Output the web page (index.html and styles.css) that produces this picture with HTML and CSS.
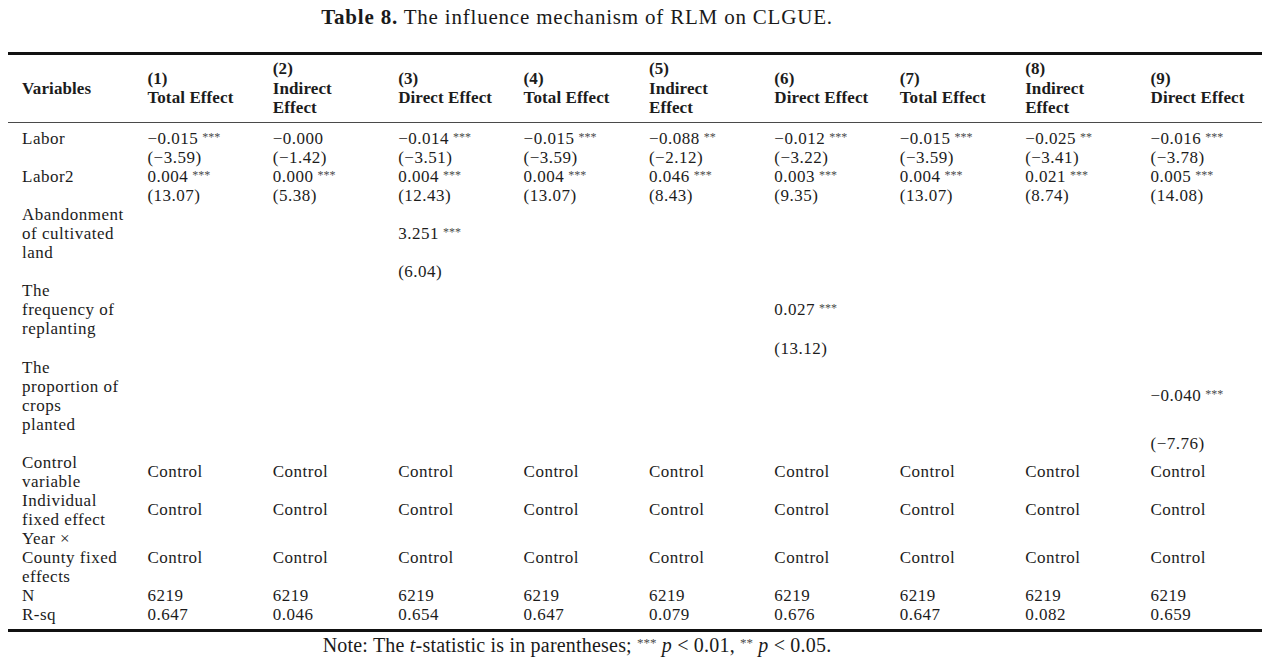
FILE: index.html
```html
<!DOCTYPE html>
<html lang="en">
<head>
<meta charset="utf-8">
<title>Table 8</title>
<link rel="stylesheet" href="styles.css">
</head>
<body>
<div class="page">
  <div class="caption"><b>Table 8.</b> The influence mechanism of RLM on CLGUE.</div>
  <div class="tablewrap">
    <table class="results">
      <thead>
        <tr>
          <th>Variables</th>
          <th>(1)<br>Total Effect</th>
          <th>(2)<br>Indirect<br>Effect</th>
          <th>(3)<br>Direct Effect</th>
          <th>(4)<br>Total Effect</th>
          <th>(5)<br>Indirect<br>Effect</th>
          <th>(6)<br>Direct Effect</th>
          <th>(7)<br>Total Effect</th>
          <th>(8)<br>Indirect<br>Effect</th>
          <th>(9)<br>Direct Effect</th>
        </tr>
      </thead>
      <tbody>
        <tr class="first">
          <td>Labor</td>
          <td>−0.015<sup>***</sup></td>
          <td>−0.000</td>
          <td>−0.014<sup>***</sup></td>
          <td>−0.015<sup>***</sup></td>
          <td>−0.088<sup>**</sup></td>
          <td>−0.012<sup>***</sup></td>
          <td>−0.015<sup>***</sup></td>
          <td>−0.025<sup>**</sup></td>
          <td>−0.016<sup>***</sup></td>
        </tr>
        <tr>
          <td></td>
          <td>(−3.59)</td>
          <td>(−1.42)</td>
          <td>(−3.51)</td>
          <td>(−3.59)</td>
          <td>(−2.12)</td>
          <td>(−3.22)</td>
          <td>(−3.59)</td>
          <td>(−3.41)</td>
          <td>(−3.78)</td>
        </tr>
        <tr>
          <td>Labor2</td>
          <td>0.004<sup>***</sup></td>
          <td>0.000<sup>***</sup></td>
          <td>0.004<sup>***</sup></td>
          <td>0.004<sup>***</sup></td>
          <td>0.046<sup>***</sup></td>
          <td>0.003<sup>***</sup></td>
          <td>0.004<sup>***</sup></td>
          <td>0.021<sup>***</sup></td>
          <td>0.005<sup>***</sup></td>
        </tr>
        <tr>
          <td></td>
          <td>(13.07)</td>
          <td>(5.38)</td>
          <td>(12.43)</td>
          <td>(13.07)</td>
          <td>(8.43)</td>
          <td>(9.35)</td>
          <td>(13.07)</td>
          <td>(8.74)</td>
          <td>(14.08)</td>
        </tr>
        <tr>
          <td>Abandonment<br>of cultivated<br>land</td>
          <td></td><td></td>
          <td>3.251<sup>***</sup></td>
          <td></td><td></td><td></td><td></td><td></td><td></td>
        </tr>
        <tr>
          <td></td><td></td><td></td>
          <td>(6.04)</td>
          <td></td><td></td><td></td><td></td><td></td><td></td>
        </tr>
        <tr>
          <td>The<br>frequency of<br>replanting</td>
          <td></td><td></td><td></td><td></td><td></td>
          <td>0.027<sup>***</sup></td>
          <td></td><td></td><td></td>
        </tr>
        <tr>
          <td></td><td></td><td></td><td></td><td></td><td></td>
          <td>(13.12)</td>
          <td></td><td></td><td></td>
        </tr>
        <tr>
          <td>The<br>proportion of<br>crops<br>planted</td>
          <td></td><td></td><td></td><td></td><td></td><td></td><td></td><td></td>
          <td>−0.040<sup>***</sup></td>
        </tr>
        <tr>
          <td></td><td></td><td></td><td></td><td></td><td></td><td></td><td></td><td></td>
          <td>(−7.76)</td>
        </tr>
        <tr>
          <td>Control<br>variable</td>
          <td>Control</td><td>Control</td><td>Control</td><td>Control</td><td>Control</td><td>Control</td><td>Control</td><td>Control</td><td>Control</td>
        </tr>
        <tr>
          <td>Individual<br>fixed effect</td>
          <td>Control</td><td>Control</td><td>Control</td><td>Control</td><td>Control</td><td>Control</td><td>Control</td><td>Control</td><td>Control</td>
        </tr>
        <tr>
          <td>Year ×<br>County fixed<br>effects</td>
          <td>Control</td><td>Control</td><td>Control</td><td>Control</td><td>Control</td><td>Control</td><td>Control</td><td>Control</td><td>Control</td>
        </tr>
        <tr>
          <td>N</td>
          <td>6219</td><td>6219</td><td>6219</td><td>6219</td><td>6219</td><td>6219</td><td>6219</td><td>6219</td><td>6219</td>
        </tr>
        <tr class="last">
          <td>R-sq</td>
          <td>0.647</td>
          <td>0.046</td>
          <td>0.654</td>
          <td>0.647</td>
          <td>0.079</td>
          <td>0.676</td>
          <td>0.647</td>
          <td>0.082</td>
          <td>0.659</td>
        </tr>
      </tbody>
    </table>
  </div>
  <div class="note">Note: The <i>t</i>-statistic is in parentheses; <sup>***</sup> <i>p</i> &lt; 0.01, <sup>**</sup> <i>p</i> &lt; 0.05.</div>
</div>
</body>
</html>
```

FILE: styles.css
```css
html, body {
  margin: 0;
  padding: 0;
  background: #ffffff;
}

body {
  font-family: "Liberation Serif", "Times New Roman", serif;
  color: #1c1c1c;
}

.page {
  width: 1280px;
  height: 661px;
  overflow: hidden;
}

.caption {
  width: 1138px;
  margin-left: 8px;
  padding-top: 5px;
  font-size: 21px;
  line-height: 24px;
  letter-spacing: 0.8px;
  text-align: center;
  color: #1a1a1a;
}

.caption b {
  font-weight: bold;
}

.tablewrap {
  margin-top: 23px;
  margin-left: 8px;
  width: 1254px;
  border-top: 3px solid #111;
  border-bottom: 3px solid #111;
}

.results {
  width: 1254px;
  table-layout: fixed;
  border-collapse: separate;
  border-spacing: 0;
  font-size: 17px;
  line-height: 19.05px;
  letter-spacing: 0.5px;
}

.results th,
.results td {
  padding: 0 0 0 14px;
  text-align: left;
  vertical-align: middle;
  white-space: nowrap;
}

.results th {
  font-weight: bold;
  letter-spacing: 0.1px;
  line-height: 19.5px;
  padding-top: 4px;
  padding-bottom: 4.5px;
  border-bottom: 1px solid #4a4a4a;
}

.results tr.first td {
  padding-top: 6px;
}

.results tr.last td {
  padding-bottom: 5px;
}

.results sup,
.note sup {
  font-size: 12px;
  line-height: 0;
  vertical-align: 3px;
  margin-left: 4px;
  letter-spacing: 0;
  color: #4a4a4a;
}

.note {
  width: 1138px;
  margin-left: 8px;
  margin-top: 2px;
  font-size: 20px;
  line-height: 22px;
  letter-spacing: 0.2px;
  text-align: center;
  color: #1a1a1a;
}

.note sup {
  margin-left: 0;
  font-size: 13px;
  vertical-align: 5px;
}
```
